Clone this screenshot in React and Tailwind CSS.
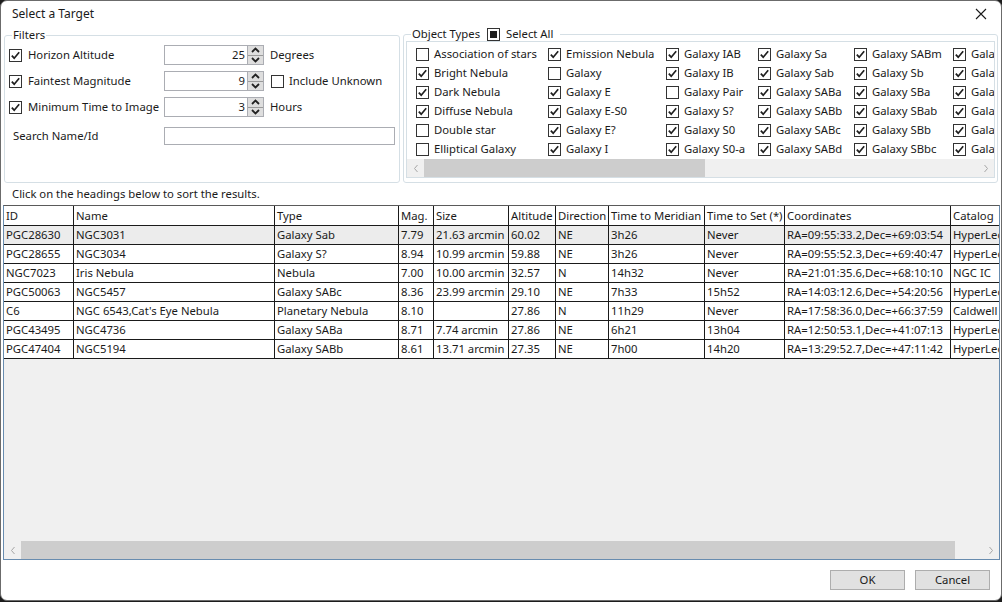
import React from 'react';

const font = { fontFamily: '"Noto Sans", "Open Sans", sans-serif' };

const Check = ({ checked, mixed }) => (
  <span className="w-[13px] h-[13px] shrink-0 border border-[#333333] bg-white flex items-center justify-center">
    {checked && (
      <svg width="11" height="11" viewBox="0 0 11 11">
        <path d="M1.8 5.6 L4.2 8.2 L9.2 2.2" fill="none" stroke="#1f1f1f" strokeWidth="1.7" />
      </svg>
    )}
    {mixed && <span className="w-[7px] h-[7px] bg-[#1f1f1f]" />}
  </span>
);

const Spin = ({ value }) => (
  <div className="flex w-[100px] h-[20px]">
    <div className="flex-1 border border-[#abadb3] flex items-center justify-end pr-[2px]">{value}</div>
    <div className="w-[16px] flex flex-col border border-l-0 border-[#abadb3]">
      <div className="flex-1 bg-[#dedede] border-b border-[#9a9a9a] flex items-center justify-center">
        <svg width="9" height="6" viewBox="0 0 9 6">
          <path d="M1 5 L4.5 1.5 L8 5" fill="none" stroke="#222" strokeWidth="1.8" />
        </svg>
      </div>
      <div className="flex-1 bg-[#dedede] flex items-center justify-center">
        <svg width="9" height="6" viewBox="0 0 9 6">
          <path d="M1 1 L4.5 4.5 L8 1" fill="none" stroke="#222" strokeWidth="1.8" />
        </svg>
      </div>
    </div>
  </div>
);

const ScrollBar = ({ thumbStart, thumbWidth }) => (
  <div className="h-[18px] bg-[#f0f0f0] flex items-center relative shrink-0">
    <div className="w-[17px] flex items-center justify-center">
      <svg width="6" height="9" viewBox="0 0 6 9">
        <path d="M4.5 1 L1.5 4.5 L4.5 8" fill="none" stroke="#a6a6a6" strokeWidth="1" />
      </svg>
    </div>
    <div className="flex-1 h-full">
      <div className="h-full bg-[#cdcdcd]" style={{ marginLeft: thumbStart, width: thumbWidth }} />
    </div>
    <div className="w-[17px] flex items-center justify-center">
      <svg width="6" height="9" viewBox="0 0 6 9">
        <path d="M1.5 1 L4.5 4.5 L1.5 8" fill="none" stroke="#a6a6a6" strokeWidth="1" />
      </svg>
    </div>
  </div>
);

const typeColumns = [
  { w: 132, items: [['Association of stars', false], ['Bright Nebula', true], ['Dark Nebula', true], ['Diffuse Nebula', true], ['Double star', false], ['Elliptical Galaxy', false]] },
  { w: 118, items: [['Emission Nebula', true], ['Galaxy', false], ['Galaxy E', true], ['Galaxy E-S0', true], ['Galaxy E?', true], ['Galaxy I', true]] },
  { w: 92, items: [['Galaxy IAB', true], ['Galaxy IB', true], ['Galaxy Pair', false], ['Galaxy S?', true], ['Galaxy S0', true], ['Galaxy S0-a', true]] },
  { w: 96, items: [['Galaxy Sa', true], ['Galaxy Sab', true], ['Galaxy SABa', true], ['Galaxy SABb', true], ['Galaxy SABc', true], ['Galaxy SABd', true]] },
  { w: 99, items: [['Galaxy SABm', true], ['Galaxy Sb', true], ['Galaxy SBa', true], ['Galaxy SBab', true], ['Galaxy SBb', true], ['Galaxy SBbc', true]] },
  { w: 110, items: [['Galaxy SBc', true], ['Galaxy SBd', true], ['Galaxy SBm', true], ['Galaxy Sc', true], ['Galaxy Scd', true], ['Galaxy Sd', true]] },
];

const columns = [
  ['ID', 70], ['Name', 201], ['Type', 124], ['Mag.', 35], ['Size', 75], ['Altitude', 47],
  ['Direction', 53], ['Time to Meridian', 96], ['Time to Set (*)', 80], ['Coordinates', 166], ['Catalog', 80],
];

const rows = [
  ['PGC28630', 'NGC3031', 'Galaxy Sab', '7.79', '21.63 arcmin', '60.02', 'NE', '3h26', 'Never', 'RA=09:55:33.2,Dec=+69:03:54', 'HyperLeda'],
  ['PGC28655', 'NGC3034', 'Galaxy S?', '8.94', '10.99 arcmin', '59.88', 'NE', '3h26', 'Never', 'RA=09:55:52.3,Dec=+69:40:47', 'HyperLeda'],
  ['NGC7023', 'Iris Nebula', 'Nebula', '7.00', '10.00 arcmin', '32.57', 'N', '14h32', 'Never', 'RA=21:01:35.6,Dec=+68:10:10', 'NGC IC'],
  ['PGC50063', 'NGC5457', 'Galaxy SABc', '8.36', '23.99 arcmin', '29.10', 'NE', '7h33', '15h52', 'RA=14:03:12.6,Dec=+54:20:56', 'HyperLeda'],
  ['C6', "NGC 6543,Cat's Eye Nebula", 'Planetary Nebula', '8.10', '', '27.86', 'N', '11h29', 'Never', 'RA=17:58:36.0,Dec=+66:37:59', 'Caldwell'],
  ['PGC43495', 'NGC4736', 'Galaxy SABa', '8.71', '7.74 arcmin', '27.86', 'NE', '6h21', '13h04', 'RA=12:50:53.1,Dec=+41:07:13', 'HyperLeda'],
  ['PGC47404', 'NGC5194', 'Galaxy SABb', '8.61', '13.71 arcmin', '27.35', 'NE', '7h00', '14h20', 'RA=13:29:52.7,Dec=+47:11:42', 'HyperLeda'],
];

export default function App() {
  return (
    <div className="w-[1002px] h-[602px] bg-[#1c1c1c] text-[11.3px] text-[#1a1a1a]" style={font}>
      <div className="w-[1002px] h-[601px] bg-white border border-[#6b6b6b] rounded-[7px] overflow-hidden flex flex-col">
        {/* title bar */}
        <div className="h-[25px] shrink-0 flex items-center justify-between pl-[11px] pr-[14px]">
          <span className="text-[12px]">Select a Target</span>
          <svg width="12" height="12" viewBox="0 0 12 12">
            <path d="M1 1 L11 11 M11 1 L1 11" stroke="#1a1a1a" strokeWidth="1.1" />
          </svg>
        </div>

        {/* filters and object types */}
        <div className="h-[157px] shrink-0 flex items-start pl-[3px]">
          <fieldset className="mt-[1px] w-[396px] h-[156px] border border-[#d5dfe5] rounded-[3px]">
            <legend className="ml-[7px] px-[1px] leading-[16px]">Filters</legend>
            <div className="pt-[2px] pl-[4px] flex flex-col gap-[6px]">
              {[
                ['Horizon Altitude', '25', 'Degrees'],
                ['Faintest Magnitude', '9', null],
                ['Minimum Time to Image', '3', 'Hours'],
              ].map(([label, val, unit]) => (
                <div key={label} className="h-[20px] flex items-center">
                  <div className="w-[155px] flex items-center gap-[6px]">
                    <Check checked />
                    <span>{label}</span>
                  </div>
                  <Spin value={val} />
                  {unit ? (
                    <span className="ml-[6px]">{unit}</span>
                  ) : (
                    <div className="ml-[7px] flex items-center gap-[5px]">
                      <Check />
                      <span>Include Unknown</span>
                    </div>
                  )}
                </div>
              ))}
              <div className="h-[18px] mt-[4px] flex items-center">
                <span className="w-[155px] pl-[4px]">Search Name/Id</span>
                <div className="w-[231px] h-[18px] border border-[#abadb3]" />
              </div>
            </div>
          </fieldset>

          <fieldset className="ml-[3px] w-[595px] h-[157px] border border-[#d5dfe5] rounded-[3px]">
            <legend className="ml-[7px] px-[1px] leading-[16px] flex items-center">
              <span>Object Types</span>
              <span className="ml-[7px] mr-[6px]"><Check mixed /></span>
              <span className="pr-[6px]">Select All</span>
            </legend>
            <div className="-mt-[1px] ml-[2px] w-[589px] h-[137px] border border-[#d5dfe5] flex flex-col overflow-hidden">
              <div className="flex-1 flex pt-[3px] pl-[9px] overflow-hidden">
                {typeColumns.map((col, i) => (
                  <div key={i} className="shrink-0 flex flex-col" style={{ width: col.w }}>
                    {col.items.map(([name, on]) => (
                      <div key={name} className="h-[19px] flex items-center gap-[5px] whitespace-nowrap">
                        <Check checked={on} />
                        <span>{name}</span>
                      </div>
                    ))}
                  </div>
                ))}
              </div>
              <ScrollBar thumbStart={0} thumbWidth={281} />
            </div>
          </fieldset>
        </div>

        <div className="h-[22px] shrink-0 flex items-center pl-[11px]">
          Click on the headings below to sort the results.
        </div>

        {/* results grid */}
        <div className="h-[355px] shrink-0 ml-[2px] w-[997px] border border-[#688caf] border-t-[#5a5a5a] bg-[#f0f0f0] flex flex-col overflow-hidden">
          <div className="flex-1 overflow-hidden">
            <div className="h-[20px] flex bg-white border-b border-[#1a1a1a] whitespace-nowrap">
              {columns.map(([name, w], i) => (
                <div
                  key={name}
                  className={`shrink-0 flex items-center pl-[2px] pt-[1px] overflow-hidden ${i < columns.length - 1 ? 'border-r border-[#1a1a1a]' : ''}`}
                  style={{ width: w }}
                >
                  {name}
                </div>
              ))}
            </div>
            {rows.map((r, ri) => (
              <div
                key={ri}
                className={`h-[19px] flex border-b border-[#1a1a1a] whitespace-nowrap w-max ${ri === 0 ? 'bg-[#ececec]' : 'bg-white'}`}
              >
                {r.map((cell, ci) => (
                  <div
                    key={ci}
                    className={`shrink-0 flex items-center pl-[2px] overflow-hidden ${ci < r.length - 1 ? 'border-r border-[#1a1a1a]' : ''}`}
                    style={{ width: columns[ci][1] }}
                  >
                    {cell}
                  </div>
                ))}
              </div>
            ))}
          </div>
          <ScrollBar thumbStart={0} thumbWidth={934} />
        </div>

        {/* buttons */}
        <div className="flex-1 flex justify-end items-start pt-[10px] pr-[11px] gap-[10px]">
          <button className="w-[75px] h-[20px] bg-[#e1e1e1] border border-[#adadad] flex items-center justify-center">OK</button>
          <button className="w-[75px] h-[20px] bg-[#e1e1e1] border border-[#adadad] flex items-center justify-center">Cancel</button>
        </div>
      </div>
    </div>
  );
}
